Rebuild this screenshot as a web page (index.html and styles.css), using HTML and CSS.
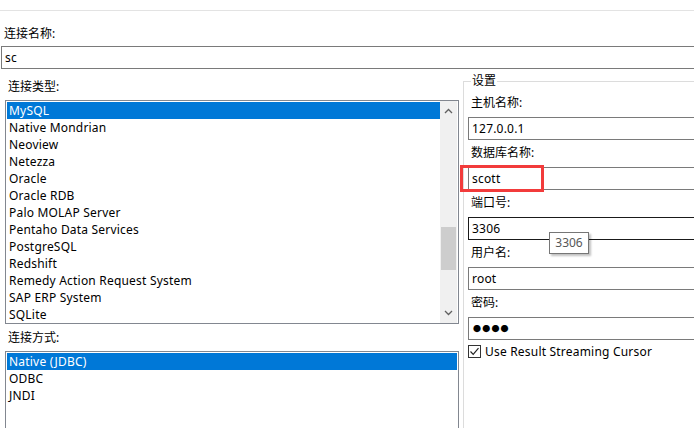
FILE: index.html
```html
<!DOCTYPE html>
<html lang="zh-CN">
<head>
<meta charset="utf-8">
<title>数据库连接</title>
<link rel="stylesheet" href="styles.css">
</head>
<body>
<div class="page">
  <div class="topbar"></div>
  <div class="name-label">连接名称:</div>
  <div class="name-input">sc</div>
  <div class="main">
    <div class="left">
      <div class="lbl">连接类型:</div>
      <div class="listbox types">
        <div class="items">
          <div class="item sel">MySQL</div>
          <div class="item">Native Mondrian</div>
          <div class="item">Neoview</div>
          <div class="item">Netezza</div>
          <div class="item">Oracle</div>
          <div class="item">Oracle RDB</div>
          <div class="item">Palo MOLAP Server</div>
          <div class="item">Pentaho Data Services</div>
          <div class="item">PostgreSQL</div>
          <div class="item">Redshift</div>
          <div class="item">Remedy Action Request System</div>
          <div class="item">SAP ERP System</div>
          <div class="item">SQLite</div>
        </div>
        <div class="vscroll">
          <div class="arrow"><svg width="9" height="6" viewBox="0 0 9 6"><path d="M1 5 L4.5 1.5 L8 5" fill="none" stroke="#606060" stroke-width="1.3"/></svg></div>
          <div class="track"><div class="thumb"></div></div>
          <div class="arrow"><svg width="9" height="6" viewBox="0 0 9 6"><path d="M1 1 L4.5 4.5 L8 1" fill="none" stroke="#606060" stroke-width="1.3"/></svg></div>
        </div>
      </div>
      <div class="lbl lbl2">连接方式:</div>
      <div class="listbox access">
        <div class="items">
          <div class="item sel">Native (JDBC)</div>
          <div class="item">ODBC</div>
          <div class="item">JNDI</div>
        </div>
      </div>
    </div>
    <div class="settings">
      <span class="legend">设置</span>
      <div class="field">
        <div class="flabel">主机名称:</div>
        <div class="finput">127.0.0.1</div>
      </div>
      <div class="field">
        <div class="flabel">数据库名称:</div>
        <div class="finput">scott</div>
      </div>
      <div class="field">
        <div class="flabel">端口号:</div>
        <div class="finput focus">3306</div>
      </div>
      <div class="field">
        <div class="flabel">用户名:</div>
        <div class="finput">root</div>
      </div>
      <div class="field">
        <div class="flabel">密码:</div>
        <div class="finput dots">●●●●</div>
      </div>
      <div class="check">
        <span class="box"><svg width="11" height="11" viewBox="0 0 11 11"><path d="M1.5 5.5 L4.2 8.3 L9.5 2.2" fill="none" stroke="#222" stroke-width="1.2"/></svg></span>
        <span>Use Result Streaming Cursor</span>
      </div>
    </div>
  </div>
  <div class="highlight"></div>
  <div class="tooltip">3306</div>
</div>
</body>
</html>
```
FILE: styles.css
```css
* { box-sizing: border-box; }
html, body { margin: 0; padding: 0; background: #fff; }
body { width: 694px; height: 428px; overflow: hidden; }
.page {
  position: relative;
  width: 694px; height: 428px; overflow: hidden;
  font-family: "Noto Sans", "Noto Sans CJK SC", sans-serif;
  font-size: 12px; color: #000;
}
.topbar { height: 11px; border-bottom: 1px solid #e3e3e3; }
.name-label { padding: 16px 0 0 4px; line-height: 14px; height: 35px; }
.name-input {
  margin-left: 1px; width: 720px; height: 23px;
  border: 1px solid #7a7a7a; padding-left: 3px; line-height: 21px;
  letter-spacing: 0.2px;
}
.main { display: flex; width: 740px; }
.left { margin-left: 5px; width: 454px; flex: none; }
.lbl { padding-left: 3px; line-height: 14px; margin-top: 11px; margin-bottom: 6px; }
.lbl2 { margin-top: 7px; }
.listbox {
  border: 1px solid #828790; padding: 1px; display: flex; overflow: hidden;
}
.types { height: 224px; }
.access { height: 90px; }
.items { flex: 1; }
.item {
  height: 17px; line-height: 17px; padding-left: 2px; white-space: nowrap;
  letter-spacing: 0.2px;
}
.item.sel { background: #0078d7; color: #fff; }
.vscroll {
  width: 17px; flex: none; background: #f0f0f0;
  display: flex; flex-direction: column; margin: -1px 0 -1px 0;
}
.arrow { height: 20px; display: flex; align-items: center; justify-content: center; }
.track { flex: 1; position: relative; }
.thumb { margin: 106px 1px 0 1px; height: 43px; background: #cdcdcd; }
.settings {
  margin-left: 4px; margin-top: 12px; flex: 1;
  border-top: 1px solid #dcdcdc; border-left: 1px solid #dcdcdc;
  padding: 14px 0 0 4px; position: relative;
}
.legend {
  position: absolute; left: 7px; top: -8px; background: #fff;
  padding: 0 1px; line-height: 14px;
}
.field { margin-bottom: 6px; }
.flabel { padding-left: 3px; line-height: 14px; margin-bottom: 7px; }
.finput {
  height: 23px; border: 1px solid #7a7a7a; padding-left: 3px; line-height: 21px;
  letter-spacing: 0.2px;
}
.finput.focus { border-color: #1a1a1a; }
.finput.dots { font-size: 8px; letter-spacing: 1.2px; padding-left: 4px; }
.check { display: flex; align-items: center; height: 14px; margin-top: -2px; letter-spacing: 0.2px; }
.check .box {
  width: 13px; height: 13px; border: 1px solid #333; margin-right: 4px;
  display: flex; align-items: center; justify-content: center; background: #fff;
}
.highlight {
  position: absolute; left: 460px; top: 165px; width: 84px; height: 27px;
  border: 3px solid #f23b3b;
}
.tooltip {
  position: absolute; left: 549px; top: 232px; width: 40px; height: 22px;
  border: 1px solid #767676; background: #fff; color: #575757;
  text-align: center; line-height: 20px;
  box-shadow: 2px 2px 2px rgba(0,0,0,0.25);
}
```
